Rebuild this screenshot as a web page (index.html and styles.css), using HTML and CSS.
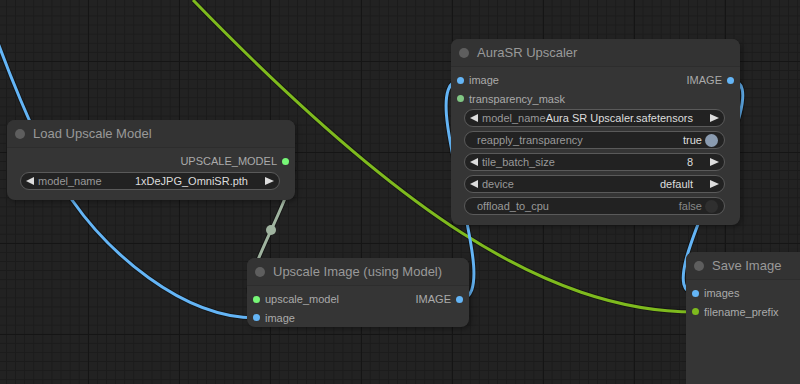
FILE: index.html
```html
<!DOCTYPE html>
<html lang="en">
<head>
  <meta charset="UTF-8">
  <meta name="viewport" content="width=device-width,initial-scale=1">
  <title>Upscale Workflow</title>
  <link rel="stylesheet" href="styles.css">
</head>
<body>
<div class="canvas">
  <!-- links sit under the nodes -->
  <svg class="links" width="800" height="384" viewBox="0 0 800 384">
    <g class="shade">
      <path d="M -17 0 C -0.5 50, 37 150, 72 200 C 107 250, 180 318, 256.5 318"/>
      <path d="M 193 0 C 393 206, 544 312, 695.5 312"/>
      <path d="M 730.5 80.3 C 784 80.3, 642 293.3, 695.5 293.3"/>
      <path d="M 459.5 299.3 C 509 299.3, 411 80.3, 460.5 80.3"/>
      <path d="M 285.5 161.3 C 320 161.3, 222 299.3, 256.5 299.3"/>
    </g>
    <path class="link image" d="M -17 0 C -0.5 50, 37 150, 72 200 C 107 250, 180 318, 256.5 318"/>
    <path class="link string" d="M 193 0 C 393 206, 544 312, 695.5 312"/>
    <path class="link image" d="M 730.5 80.3 C 784 80.3, 642 293.3, 695.5 293.3"/>
    <path class="link image" d="M 459.5 299.3 C 509 299.3, 411 80.3, 460.5 80.3"/>
    <path class="link model" d="M 285.5 161.3 C 320 161.3, 222 299.3, 256.5 299.3"/>
    <circle class="mid" cx="271" cy="230" r="5"/>
  </svg>

  <div class="node n-load">
    <div class="title"><span class="tdot"></span>Load Upscale Model</div>
    <div class="body">
      <div class="slot">
        <span></span>
        <span class="io"><span>UPSCALE_MODEL</span><i class="dot c-model"></i></span>
      </div>
      <div class="widget combo">
        <i class="arrow-l"></i><span class="name">model_name</span><span class="value"><span>1xDeJPG_OmniSR.pth</span></span><i class="arrow-r"></i>
      </div>
    </div>
  </div>

  <div class="node n-aura">
    <div class="title"><span class="tdot"></span>AuraSR Upscaler</div>
    <div class="body">
      <div class="slot">
        <span class="io"><i class="dot c-image"></i><span>image</span></span>
        <span class="io"><span>IMAGE</span><i class="dot c-image"></i></span>
      </div>
      <div class="slot">
        <span class="io"><i class="dot c-mask"></i><span>transparency_mask</span></span>
      </div>
      <div class="widget combo">
        <i class="arrow-l"></i><span class="name">model_name</span><span class="value"><span>Aura SR Upscaler.safetensors</span></span><i class="arrow-r"></i>
      </div>
      <div class="widget toggle">
        <span class="name">reapply_transparency</span><span class="value"><span>true</span></span><i class="knob"></i>
      </div>
      <div class="widget combo">
        <i class="arrow-l"></i><span class="name">tile_batch_size</span><span class="value"><span>8</span></span><i class="arrow-r"></i>
      </div>
      <div class="widget combo">
        <i class="arrow-l"></i><span class="name">device</span><span class="value"><span>default</span></span><i class="arrow-r"></i>
      </div>
      <div class="widget toggle off">
        <span class="name">offload_to_cpu</span><span class="value"><span>false</span></span><i class="knob"></i>
      </div>
    </div>
  </div>

  <div class="node n-upscale">
    <div class="title"><span class="tdot"></span>Upscale Image (using Model)</div>
    <div class="body tight">
      <div class="slot">
        <span class="io"><i class="dot c-model"></i><span>upscale_model</span></span>
        <span class="io"><span>IMAGE</span><i class="dot c-image"></i></span>
      </div>
      <div class="slot">
        <span class="io"><i class="dot c-image"></i><span>image</span></span>
      </div>
    </div>
  </div>

  <div class="node n-save">
    <div class="title"><span class="tdot"></span>Save Image</div>
    <div class="body">
      <div class="slot">
        <span class="io"><i class="dot c-image"></i><span>images</span></span>
      </div>
      <div class="slot">
        <span class="io"><i class="dot c-string"></i><span>filename_prefix</span></span>
      </div>
    </div>
  </div>
</div>
</body>
</html>
```

FILE: styles.css
```css
* { box-sizing: border-box; margin: 0; padding: 0 }
body { background: #202020; font-family: "Liberation Sans", Arial, sans-serif; overflow: hidden }

.canvas {
  position: relative;
  width: 800px;
  height: 384px;
  overflow: hidden;
  background-color: #222;
  background-image:
    linear-gradient(to right, #151515 1px, transparent 1px),
    linear-gradient(to bottom, #151515 1px, transparent 1px),
    linear-gradient(to right, #1b1b1b 1px, transparent 1px),
    linear-gradient(to bottom, #1b1b1b 1px, transparent 1px);
  background-size: 91px 91px, 91px 91px, 9.1px 9.1px, 9.1px 9.1px;
  background-position: 88px 0, 0 61px, 6px 0, 0 6.4px;
}

/* links */
.links { position: absolute; left: 0; top: 0 }
.links path { fill: none }
.shade path { stroke: rgba(0,0,0,.35); stroke-width: 5 }
.link { stroke-width: 3 }
.link.image { stroke: #64b5f6 }
.link.string { stroke: #7eba1e }
.link.model { stroke: #9fb39f }
.mid { fill: #9fb39f }

/* nodes */
.node {
  position: absolute;
  background: #353535;
  border-radius: 8px;
  box-shadow: 2px 2px 5px rgba(0,0,0,.35);
}
.n-load { left: 7px; top: 120px; width: 288px; height: 80px }
.n-aura { left: 451px; top: 39px; width: 289px; height: 186px }
.n-upscale { left: 247px; top: 258px; width: 222px; height: 69px }
.n-save { left: 686px; top: 252px; width: 200px; height: 200px }

.title {
  height: 28px;
  display: flex;
  align-items: center;
  gap: 8px;
  padding-left: 8px;
  color: #999;
  font-size: 13px;
  background: #333;
  border-radius: 8px 8px 0 0;
  border-bottom: 1px solid #2d2d2d;
  white-space: nowrap;
}
.tdot { width: 10px; height: 10px; border-radius: 50%; background: #5e5e5e }

.body { padding: 4px 0 10px }
.body.tight { padding-bottom: 0 }

.slot {
  height: 18.6px;
  display: flex;
  align-items: center;
  justify-content: space-between;
  padding: 0 6px;
  font-size: 11px;
  color: #aaa;
}
.io { display: flex; align-items: center; gap: 5px; white-space: nowrap }
.dot { display: block; width: 7px; height: 7px; border-radius: 50% }
.c-image { background: #64b5f6 }
.c-mask { background: #81c784 }
.c-model { background: #77f777 }
.c-string { background: #7eba1e }

/* widgets */
.widget {
  height: 18px;
  margin: 0 15px 0 13px;
  display: flex;
  align-items: center;
  background: #222;
  border: 1px solid #5a5a5a;
  border-radius: 9px;
  font-size: 11px;
  white-space: nowrap;
}
.slot + .widget { margin-top: 1px }
.widget + .widget { margin-top: 4px }
.combo { padding: 0 5px }
.toggle { padding: 0 6px 0 12px }
.name { color: #999 }
.value { flex: 1; min-width: 0; display: flex; justify-content: flex-end; color: #ddd }
.value span { flex-shrink: 0 }
.arrow-l, .arrow-r {
  display: block;
  width: 0;
  height: 0;
  border-top: 4.5px solid transparent;
  border-bottom: 4.5px solid transparent;
}
.arrow-l { border-right: 8px solid #ddd; margin-right: 4px }
.arrow-r { border-left: 9px solid #ddd; margin-left: 17px }
.knob { display: block; width: 13px; height: 13px; border-radius: 50%; background: #8a9bb0; margin-left: 3px }
.off .value { color: #888 }
.off .knob { background: #2f2f2f }
```
